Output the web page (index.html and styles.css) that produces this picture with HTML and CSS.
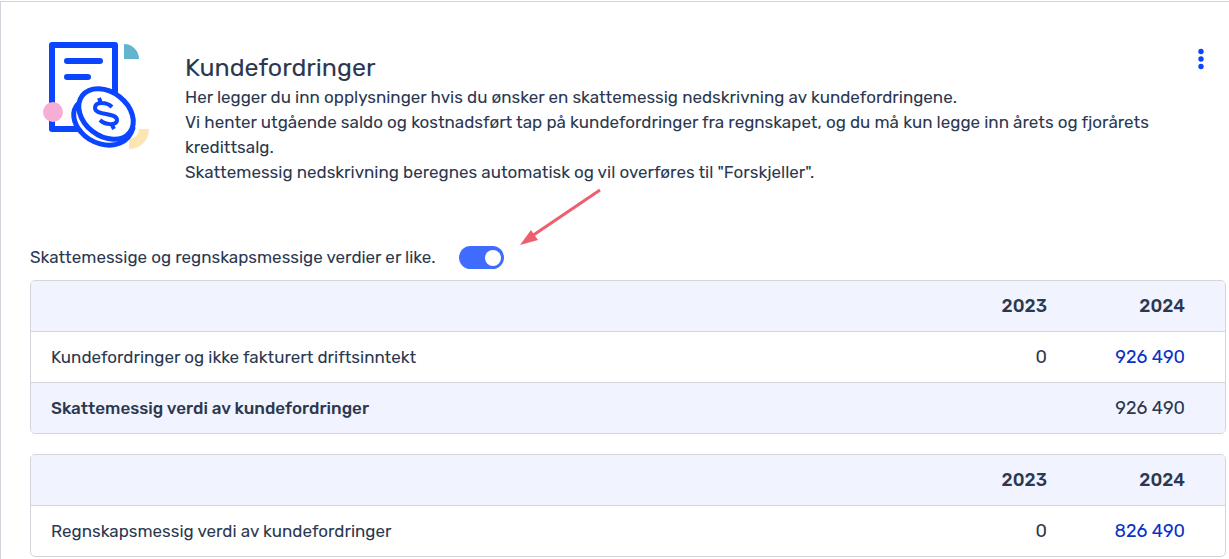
FILE: index.html
```html
<!DOCTYPE html>
<html lang="nb">
<head>
    <meta charset="UTF-8">
    <meta name="viewport" content="width=device-width, initial-scale=1.0">
    <title>Kundefordringer</title>
    <link rel="stylesheet" href="styles.css">
</head>
<body>
    <main class="card">
        <header class="card-header">
            <svg class="card-icon" viewBox="0 0 110 112" aria-hidden="true">
                <path d="M84 5a15 15 0 0 1 15 15H84z" fill="#63b5cf"/>
                <path d="M109 90a20 20 0 0 1-20 20v-10a10 10 0 0 0 10-10z" fill="#fce5b0"/>
                <rect x="12" y="6" width="63" height="84" fill="#fff" stroke="#0b45ff" stroke-width="6" stroke-linejoin="round"/>
                <path d="M27 22h33M27 38h21" fill="none" stroke="#0b45ff" stroke-width="6" stroke-linecap="round"/>
                <circle cx="13" cy="73" r="10" fill="#f7aed5"/>
                <path d="M38 65C31 72 33 84 41 93c10 12 28 16 39 11 7-3 11-8 13-15z" fill="#fff" stroke="#0b45ff" stroke-width="5" stroke-linejoin="round"/>
                <ellipse cx="66" cy="75" rx="30" ry="22" transform="rotate(38 66 75)" fill="#fff" stroke="#0b45ff" stroke-width="5"/>
                <path d="M72 68c-5-5-17-6-17 1 0 8 22 4 22 12 0 6-12 5-17 0M61 64l-2-5M72 86l2 4" fill="none" stroke="#0b45ff" stroke-width="4"/>
            </svg>
            <div class="card-intro">
                <h1 class="card-title">Kundefordringer</h1>
                <p class="card-text">
                    Her legger du inn opplysninger hvis du ønsker en skattemessig nedskrivning av kundefordringene.<br>
                    Vi henter utgående saldo og kostnadsført tap på kundefordringer fra regnskapet, og du må kun legge inn årets og fjorårets kredittsalg.<br>
                    Skattemessig nedskrivning beregnes automatisk og vil overføres til "Forskjeller".
                </p>
            </div>
            <button class="menu-button" type="button" aria-label="Flere valg">
                <svg width="6" height="22" viewBox="0 0 6 22" fill="#0b45ff" aria-hidden="true">
                    <circle cx="3" cy="3.5" r="2.7"/>
                    <circle cx="3" cy="11" r="2.7"/>
                    <circle cx="3" cy="18.5" r="2.7"/>
                </svg>
            </button>
        </header>

        <div class="toggle-row">
            <label for="like-verdier">Skattemessige og regnskapsmessige verdier er like.</label>
            <span class="toggle-wrap">
                <input class="toggle" type="checkbox" role="switch" id="like-verdier" checked>
                <svg class="arrow" width="90" height="62" viewBox="0 0 90 62" aria-hidden="true">
                    <path d="M84 5 16 51" stroke="#ee5f6e" stroke-width="3"/>
                    <path d="M4 60 15 45 22 55z" fill="#ee5f6e"/>
                </svg>
            </span>
        </div>

        <div class="table-box">
            <table class="table">
                <thead>
                    <tr><td></td><th scope="col">2023</th><th scope="col">2024</th></tr>
                </thead>
                <tbody>
                    <tr>
                        <th scope="row">Kundefordringer og ikke fakturert driftsinntekt</th>
                        <td>0</td>
                        <td><a href="#">926 490</a></td>
                    </tr>
                    <tr class="sum">
                        <th scope="row">Skattemessig verdi av kundefordringer</th>
                        <td></td>
                        <td>926 490</td>
                    </tr>
                </tbody>
            </table>
        </div>

        <div class="table-box">
            <table class="table">
                <thead>
                    <tr><td></td><th scope="col">2023</th><th scope="col">2024</th></tr>
                </thead>
                <tbody>
                    <tr>
                        <th scope="row">Regnskapsmessig verdi av kundefordringer</th>
                        <td>0</td>
                        <td><a href="#">826 490</a></td>
                    </tr>
                </tbody>
            </table>
        </div>
    </main>
</body>
</html>
```
FILE: styles.css
```css
* {
    box-sizing: border-box;
}

body {
    margin: 0;
    padding-top: 1px;
    background: #fff;
    color: #2b3850;
    font-family: Rubik, Roboto, sans-serif;
    font-size: 17px;
    line-height: 25px;
}

.card {
    padding: 37px 3px 2px 29px;
    border-top: 1px solid #d4d5dc;
    border-left: 1px solid #d4d5dc;
}

.card-header {
    display: flex;
    align-items: flex-start;
    margin-bottom: 60px;
}

.card-icon {
    flex: none;
    width: 110px;
    height: 112px;
    margin: 0 35px 0 10px;
}

.card-intro {
    flex: 1;
    padding-top: 14px;
}

.card-title {
    margin: 0 0 2px;
    font-size: 25px;
    font-weight: 400;
    line-height: 30px;
}

.card-text {
    margin: 0;
}

.menu-button {
    flex: none;
    padding: 9px 12px;
    margin-right: 10px;
    border: none;
    background: transparent;
    cursor: pointer;
}

.menu-button svg {
    display: block;
}

.toggle-row {
    display: flex;
    align-items: center;
    gap: 23px;
    margin-bottom: 10px;
}

.toggle-wrap {
    position: relative;
    display: flex;
}

.toggle {
    appearance: none;
    display: flex;
    align-items: center;
    width: 45px;
    height: 23px;
    margin: 0;
    padding: 0 3px;
    border-radius: 12px;
    background: #aab0bf;
    cursor: pointer;
}

.toggle::before {
    content: "";
    width: 16px;
    height: 16px;
    border-radius: 50%;
    background: #fff;
}

.toggle:checked {
    justify-content: flex-end;
    background: #3f6cff;
}

.arrow {
    position: absolute;
    left: 57px;
    bottom: 22px;
    pointer-events: none;
}

.table-box {
    margin-bottom: 20px;
    border: 1px solid #d4d5dc;
    border-radius: 5px;
    overflow: hidden;
}

.table-box:last-child {
    margin-bottom: 0;
}

.table {
    width: 100%;
    border-spacing: 0;
    table-layout: fixed;
}

.table th,
.table td {
    height: 51px;
    padding: 0 40px 0 0;
    border-bottom: 1px solid #d4d5dc;
    text-align: right;
    font-weight: 400;
}

.table tr > :first-child {
    padding: 0 20px;
    text-align: left;
}

.table tr > :not(:first-child) {
    width: 138px;
    font-size: 18px;
}

.table tbody tr:last-child > * {
    height: 50px;
    border-bottom: none;
}

.table thead tr,
.table .sum {
    background: #f1f3ff;
}

.table thead th,
.table .sum th {
    font-weight: 500;
}

.table a {
    color: #0a32c3;
    text-decoration: none;
}
```
